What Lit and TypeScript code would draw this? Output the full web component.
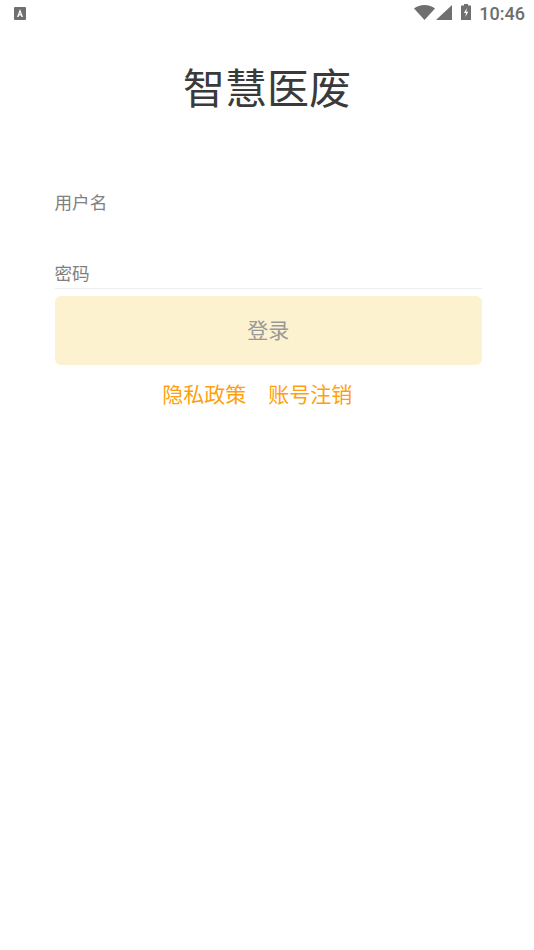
import { LitElement, html, css } from "lit";
import { customElement } from "lit/decorators.js";

@customElement("app-root")
export class AppRoot extends LitElement {
  static styles = css`
    :host {
      display: block;
      width: 534px;
      height: 950px;
      background: #fff;
      font-family: "Noto Sans CJK SC", "Roboto", sans-serif;
      overflow: hidden;
    }
    .status {
      height: 28px;
      display: flex;
      align-items: center;
      justify-content: space-between;
      padding: 0 9px 0 14px;
      color: #6f6f6f;
    }
    .notif { display: block; margin-bottom: 2px; }
    .right { display: flex; align-items: center; }
    .time {
      font-family: "Roboto", sans-serif;
      font-weight: 500;
      font-size: 18px;
      line-height: 28px;
      margin-left: 8px;
      color: #6e6e6e;
    }
    .wifi { margin-bottom: 3px; }
    .cell { margin-left: 1px; margin-bottom: 3px; }
    .batt { margin-left: 9px; margin-bottom: 4px; }
    .title {
      margin: 29px 0 0;
      height: 58px;
      line-height: 58px;
      text-align: center;
      font-size: 42px;
      font-weight: 400;
      color: #3a3a3a;
    }
    .form {
      margin-top: 73px;
      padding: 0 52px 0 54.5px;
      display: flex;
      flex-direction: column;
    }
    .field {
      font-size: 17.6px;
      line-height: 28px;
      color: #808080;
    }
    .user { height: 71px; }
    .pass {
      height: 29px;
      border-bottom: 1px solid #eeeeee;
    }
    .btn {
      margin-top: 7px;
      height: 69px;
      border-radius: 6px;
      background: #fdf2d0;
      color: #999;
      font-size: 21px;
      line-height: 66px;
      text-align: center;
    }
    .links {
      margin-top: 13px;
      padding-right: 22px;
      display: flex;
      justify-content: center;
      gap: 22px;
      font-size: 21px;
      line-height: 30px;
      color: #ff9f0f;
    }
  `;

  render() {
    return html`
      <div class="status">
        <svg class="notif" width="12" height="13" viewBox="0 0 12 13">
          <rect width="12" height="13" rx="1" fill="#6f6f6f"></rect>
          <path d="M6 2 9 10H7.500L7 8.400H5L4.500 10H3ZM5.400 7.200H6.600L6 5.400Z" fill="#fff" fill-rule="evenodd"></path>
        </svg>
        <div class="right">
          <svg class="wifi" width="21" height="15" viewBox="0 0 20 15" preserveAspectRatio="none">
            <path d="M0 3.600C2.700 1.400 6.200 0 10 0s7.300 1.400 10 3.600L10 15Z" fill="#6f6f6f"></path>
          </svg>
          <svg class="cell" width="16" height="15" viewBox="0 0 16 15">
            <path d="M16 0V15H0Z" fill="#6f6f6f"></path>
          </svg>
          <svg class="batt" width="10" height="16" viewBox="0 0 10 16">
            <path d="M3 0h4v1.500H10V16H0V1.500h3Z" fill="#6f6f6f"></path>
            <path d="M5.800 4 3 9h2L4.400 13 7.200 7.800H5.300Z" fill="#fff"></path>
          </svg>
          <span class="time">10:46</span>
        </div>
      </div>
      <h1 class="title">智慧医废</h1>
      <div class="form">
        <div class="field user">用户名</div>
        <div class="field pass">密码</div>
        <div class="btn">登录</div>
        <div class="links"><span>隐私政策</span><span>账号注销</span></div>
      </div>
    `;
  }
}
